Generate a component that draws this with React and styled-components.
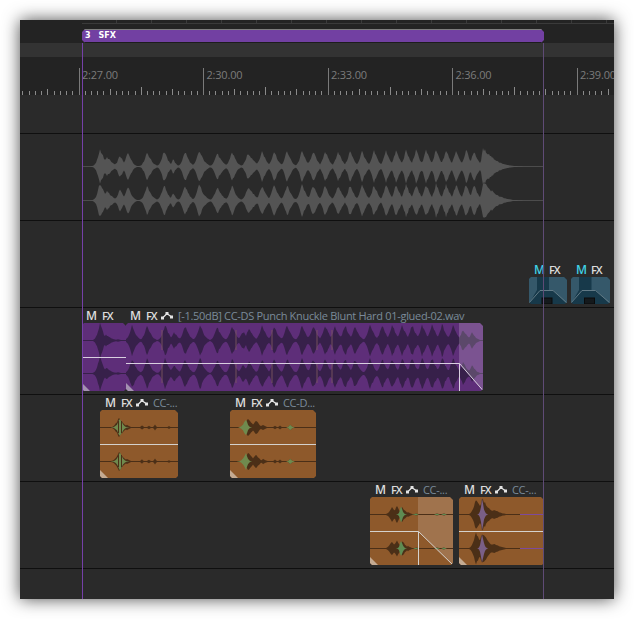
import React from 'react';
import styled, { createGlobalStyle } from 'styled-components';

const GlobalStyle = createGlobalStyle`
  html, body { margin: 0; background: #fff; }
  body { font-family: "Open Sans", "Liberation Sans", sans-serif; }
`;

// all clip data below is in page pixels, the panel sits at 20,20
const PANEL_X = 20;

const Panel = styled.div`
  position: relative;
  width: 594px;
  height: 579px;
  margin: 20px;
  background: #2a2a2a;
  overflow: hidden;
  display: flex;
  flex-direction: column;
  box-shadow: 0 0 16px rgba(0, 0, 0, 0.7);
`;

const TopStrip = styled.div`
  height: 4px;
  background: #232323;
  display: flex;
  flex-shrink: 0;
  padding-left: 62px;
`;

const TopSegment = styled.div`
  width: 35px;
  flex-shrink: 0;
  box-sizing: border-box;
  border-right: 1px solid #3a3a3a;
  border-bottom: 1px solid #3a3a3a;
`;

const MarkerLane = styled.div`
  height: 19px;
  flex-shrink: 0;
  box-sizing: border-box;
  background: #232323;
  padding: 5px 0 0 62px;
`;

const Marker = styled.div`
  width: 462px;
  height: 14px;
  box-sizing: border-box;
  background: #7240a2;
  border-top: 1px solid #7d7d7d;
  border-bottom: 1px solid #1d1d1d;
  clip-path: polygon(3px 0, calc(100% - 3px) 0, 100% 3px, 100% calc(100% - 3px), calc(100% - 3px) 100%, 3px 100%, 0 calc(100% - 3px), 0 3px);
  color: #fff;
  font: bold 8px/12px "DejaVu Sans", sans-serif;
  padding-left: 3px;
  display: flex;
  gap: 8px;
`;

const GapStrip = styled.div`
  height: 14px;
  flex-shrink: 0;
  background: #333333;
`;

const Ruler = styled.div`
  position: relative;
  height: 38px;
  flex-shrink: 0;
  background: #232323;
`;

const RulerLabels = styled.div`
  display: flex;
  padding: 10px 0 0 62px;
`;

const RulerLabel = styled.span`
  flex: 0 0 124.5px;
  font: 11px/16px "Open Sans", sans-serif;
  letter-spacing: -0.2px;
  color: #7c7c7c;
`;

const RulerTicks = styled.svg`
  position: absolute;
  left: 0;
  top: 0;
`;

const Track = styled.div`
  position: relative;
  flex-shrink: 0;
  height: ${(p) => p.$height}px;
  box-sizing: border-box;
  border-bottom: ${(p) => (p.$last ? 'none' : '1px solid #0f0f0f')};
`;

const TrackWave = styled.svg`
  position: absolute;
  left: ${(p) => p.$left}px;
  top: 0;
`;

const ClipGroup = styled.div`
  position: absolute;
  left: ${(p) => p.$left}px;
  top: ${(p) => p.$top}px;
  width: ${(p) => p.$width}px;
`;

const ClipHeader = styled.div`
  height: 15px;
  display: flex;
  align-items: center;
  padding-left: ${(p) => p.$inset}px;
  white-space: nowrap;
`;

const HeadM = styled.span`
  font: 600 12px/15px "Open Sans", sans-serif;
  color: ${(p) => (p.$active ? '#3fd0e4' : '#dcdcdc')};
  width: ${(p) => (p.$active ? 15 : 16)}px;
`;

const HeadFx = styled.span`
  font: 600 11px/15px "Open Sans", sans-serif;
  letter-spacing: -1.1px;
  color: #dcdcdc;
  width: 15px;
`;

const HeadName = styled.span`
  font: 11px/15px "Open Sans", sans-serif;
  letter-spacing: -0.31px;
  color: #7b8a99;
  margin-left: 5px;
`;

const ClipBody = styled.svg`
  display: block;
  clip-path: polygon(2px 0, calc(100% - 3px) 0, 100% 3px, 100% calc(100% - 2px), calc(100% - 2px) 100%, 2px 100%, 0 calc(100% - 2px), 0 2px);
`;

const Cursor = styled.div`
  position: absolute;
  left: ${(p) => p.$left}px;
  top: 23px;
  bottom: 0;
  width: 1px;
  background: ${(p) => p.$color};
`;

function jitter(x, seed) {
  const v = Math.sin(x * 12.9898 + seed * 78.233) * 43758.5453;
  return v - Math.floor(v);
}

// mirrored envelope around cy, one point per pixel. bursts are [x, amp, decay, attack]
function wavePath(bursts, from, to, cy, amp, seed = 1) {
  const top = [];
  const bottom = [];
  for (let x = from; x <= to; x++) {
    let e = 0;
    for (const [bx, a, decay = 4.5, attack = 3.2] of bursts) {
      const d = Math.abs(x - bx) / (x < bx ? attack : decay);
      e = Math.max(e, a * Math.exp(-Math.pow(d, 1.4)));
    }
    const h = e * amp * (0.8 + 0.2 * jitter(x, seed));
    top.push(`${x - from},${(cy - h).toFixed(1)}`);
    bottom.unshift(`${x - from},${(cy + h).toFixed(1)}`);
  }
  return `M${top.join(' L')} L${bottom.join(' L')} Z`;
}

function Stereo({ bursts, from, to, y1, y2, amp, color, lineColor }) {
  const w = to - from;
  return (
    <>
      {lineColor !== 'none' && <path d={`M0 ${y1 + 0.5}H${w}M0 ${y2 + 0.5}H${w}`} stroke={lineColor || color} />}
      <path d={wavePath(bursts, from, to, y1 + 0.5, amp, 1)} fill={color} />
      <path d={wavePath(bursts, from, to, y2 + 0.5, amp, 2)} fill={color} />
    </>
  );
}

const EnvelopeIcon = () => (
  <svg width="12" height="9" viewBox="0 0 12 9" style={{ flexShrink: 0 }}>
    <path d="M1.5 7 L6 2.5 L10.5 6" fill="none" stroke="#e4e4e4" strokeWidth="1.3" />
    <rect x="0" y="5.5" width="3" height="3" fill="#e4e4e4" />
    <rect x="4.5" y="1" width="3" height="3" fill="#e4e4e4" />
    <rect x="9" y="4.5" width="3" height="3" fill="#e4e4e4" />
  </svg>
);

function Header({ name, active, inset = 5 }) {
  return (
    <ClipHeader $inset={inset}>
      <HeadM $active={active}>M</HeadM>
      <HeadFx>FX</HeadFx>
      {name && <EnvelopeIcon />}
      {name && <HeadName>{name}</HeadName>}
    </ClipHeader>
  );
}

const BASE_BURSTS = [
  [132, 0.95], [147, 0.95], [165, 0.95], [174, 0.5], [185, 0.9], [200, 0.95], [217, 0.85],
  [232, 0.9], [243, 0.55], [249, 0.8], [262, 0.95], [274, 0.9], [287, 0.95], [302, 0.92],
  [313, 0.92], [325, 0.95], [335, 0.9], [345, 0.95], [355, 0.9], [370, 0.95], [382, 0.95],
  [392, 0.97], [402, 0.97], [412, 0.97], [422, 1], [432, 1], [442, 1], [453, 1],
];

const GREY_BURSTS = [
  [100, 1.05, 5, 3], [107, 0.55, 6], [120, 0.65, 4], [128, 0.88, 4], [147, 0.85, 5], [164, 0.92], [173, 0.45, 3, 2],
  [185, 0.88], [199, 0.92, 5.5], [217, 0.78, 5.5], [232, 0.88], [248, 0.8, 7], [262, 0.92], [274, 0.92],
  [287, 0.92], [302, 0.92], [313, 0.92], [325, 0.92], [338, 0.92], [350, 0.92], [362, 0.92],
  [374, 0.92], [386, 0.95], [396, 0.95], [406, 0.95], [416, 0.97], [426, 0.97], [436, 0.97],
  [446, 0.97], [456, 0.97], [466, 0.97], [474, 0.92], [483, 1.05, 13, 2],
];

const PurpleShort = ({ width, height }) => (
  <ClipBody width={width} height={height}>
    <rect width={width} height={height} fill="#5e2e79" />
    <Stereo bursts={[[18, 1.05, 4, 3], [24, 0.35, 6], [36, 0.08, 3]]} from={0} to={width} y1={17} y2={50} amp={17} color="#37204a" />
    <path d={`M0 34.5H${width}`} stroke="#d9cfe0" />
    <path d="M0 60 L8 68 L0 68 Z" fill="#a491b1" />
  </ClipBody>
);

const PurpleLong = ({ width, height }) => (
  <ClipBody width={width} height={height}>
    <rect width={width} height={height} fill="#5e2e79" />
    <Stereo bursts={BASE_BURSTS} from={126} to={459} y1={17} y2={50} amp={17} color="#37204a" />
    <g transform="translate(333 0)">
      <Stereo bursts={[[463, 0.7], [472, 0.5, 4], [478, 0.1, 2]]} from={459} to={483} y1={17} y2={50} amp={17} color="#37204a" />
    </g>
    {[35, 109, 145, 190, 205].map((x) => (
      <g key={x} fill="#7a5560" opacity="0.45">
        <rect x={x} y={7} width={2} height={20} />
        <rect x={x} y={40} width={2} height={20} />
      </g>
    ))}
    <path d="M333 0 H357 V68 L333 40 Z" fill="#fff" opacity="0.18" />
    <path d="M0 40.5H333.5V68M333.5 40.5L357 67.5" fill="none" stroke="#d9cfe0" />
    <path d="M0 60 L8 68 L0 68 Z" fill="#a491b1" />
  </ClipBody>
);

const OrangeClip = ({ width, height, bursts, x0, tint, tintColor, stripes = [], tail, amp = 10, line, fadeAt }) => (
  <ClipBody width={width} height={height}>
    <rect width={width} height={height} fill="#8e592b" />
    {fadeAt && <path d={`M${fadeAt} 0 H${width} V${height} L${fadeAt} ${line} Z`} fill="#fff" opacity="0.16" />}
    <Stereo bursts={bursts} from={x0} to={x0 + width} y1={17} y2={51} amp={amp} color="#4b2f17" />
    <Stereo bursts={tint} from={x0} to={x0 + width} y1={17} y2={51} amp={amp} color={tintColor} lineColor="none" />
    {stripes.map((s) => (
      <g key={s} fill="#4b2f17">
        <rect x={s} y={17 - amp * 0.6} width={1} height={amp * 1.2} />
        <rect x={s} y={51 - amp * 0.6} width={1} height={amp * 1.2} />
      </g>
    ))}
    {tail && <path d={`M${tail} 17.5H${width}M${tail} 51.5H${width}`} stroke="#7d4a9c" />}
    <path d={`M0 ${line + 0.5}H${fadeAt ? fadeAt + 0.5 : width}`} stroke="#d5d2ce" />
    {fadeAt && <path d={`M${fadeAt + 0.5} ${line + 0.5}V${height}M${fadeAt + 0.5} ${line + 0.5}L${width} ${height}`} fill="none" stroke="#d5d2ce" />}
    <path d="M0 60 L8 68 L0 68 Z" fill="#c4ab93" />
  </ClipBody>
);

const TealClip = ({ width, height }) => {
  const mid = width / 2;
  return (
    <ClipBody width={width} height={height}>
      <rect width={width} height={height} fill="#17394a" />
      <path d={`M0 0 H8 V13 L0 ${height} Z`} fill="#35586a" />
      <path d={`M${mid + 1} 0 H${width} V${height} L${mid + 5} 13 H${mid + 1} Z`} fill="#35586a" />
      <path d={`M0 ${height - 1} L11 13.5 H${mid + 5} L${width} ${height - 1}`} fill="none" stroke="#627a86" />
      <rect x={mid - 6} y={height - 6} width={10} height={6} fill="#14191c" stroke="#0a0a0a" />
    </ClipBody>
  );
};

function ClipAt({ x, top, width, height, name, active, inset, children }) {
  return (
    <ClipGroup $left={x - PANEL_X} $top={top} $width={width}>
      <Header name={name} active={active} inset={inset} />
      {children({ width, height })}
    </ClipGroup>
  );
}

const tickLines = [];
for (let i = -10; i <= 90; i++) {
  const x = Math.round(58.5 + i * 6.225) + 0.5;
  const n = ((i % 20) + 20) % 20;
  const y1 = n === 0 ? 11 : n === 10 ? 30 : n % 5 === 0 ? 32 : 34;
  tickLines.push(<line key={i} x1={x} x2={x} y1={y1} y2={38} stroke={n === 0 ? '#7a7a7a' : '#8a8a8a'} />);
}

export default function App() {
  return (
    <>
      <GlobalStyle />
      <Panel>
        <TopStrip>
          {Array.from({ length: 16 }, (_, i) => <TopSegment key={i} />)}
        </TopStrip>
        <MarkerLane>
          <Marker><span>3</span><span>SFX</span></Marker>
        </MarkerLane>
        <GapStrip />
        <Ruler>
          <RulerTicks width="594" height="38">{tickLines}</RulerTicks>
          <RulerLabels>
            {['2:27.00', '2:30.00', '2:33.00', '2:36.00', '2:39.00'].map((t) => (
              <RulerLabel key={t}>{t}</RulerLabel>
            ))}
          </RulerLabels>
        </Ruler>

        <Track $height={39} />
        <Track $height={87}>
          <TrackWave $left={62} width="462" height="86">
            <Stereo bursts={GREY_BURSTS} from={82} to={543} y1={32} y2={66} amp={18} color="#545454" lineColor="#4c4c4c" />
          </TrackWave>
        </Track>
        <Track $height={87}>
          <ClipAt x={529} top={41} width={38} height={27} active>{(p) => <TealClip {...p} />}</ClipAt>
          <ClipAt x={571} top={41} width={39} height={27} active>{(p) => <TealClip {...p} />}</ClipAt>
        </Track>
        <Track $height={87}>
          <ClipAt x={82} top={0} width={44} height={68} inset={4}>{(p) => <PurpleShort {...p} />}</ClipAt>
          <ClipAt x={126} top={0} width={357} height={68} name="[-1.50dB] CC-DS Punch Knuckle Blunt Hard 01-glued-02.wav" inset={4}>
            {(p) => <PurpleLong {...p} />}
          </ClipAt>
        </Track>
        <Track $height={87}>
          <ClipAt x={100} top={0} width={78} height={68} name="CC-...">
            {(p) => <OrangeClip {...p} x0={100} amp={10} line={34} tintColor="#6f8a4e" stripes={[18, 21]}
              tint={[[120, 0.95, 3, 3]]}
              bursts={[[119, 1, 5, 3.5], [127, 0.3, 3, 2], [142, 0.25, 1.5, 1.5], [149, 0.22, 1.5, 1.5], [155, 0.3, 1.5, 1.5], [169, 0.14, 1.5, 1.5]]} />}
          </ClipAt>
          <ClipAt x={230} top={0} width={86} height={68} name="CC-D...">
            {(p) => <OrangeClip {...p} x0={230} amp={10} line={34} tintColor="#6f8a4e"
              tint={[[246, 0.9, 2, 3], [290, 0.3, 2, 1.5]]}
              bursts={[[248, 1, 5, 3], [256, 0.8, 3.5, 3], [263, 0.3, 3, 2], [275, 0.2, 1.5, 1.5], [280, 0.2, 1.5, 1.5], [290, 0.3, 2, 1.5]]} />}
          </ClipAt>
        </Track>
        <Track $height={87}>
          <ClipAt x={370} top={0} width={83} height={68} name="CC-...">
            {(p) => <OrangeClip {...p} x0={370} amp={9} line={34} fadeAt={48} tintColor="#5e8b52"
              tint={[[401, 1, 2, 1.5], [416, 0.1, 2, 2], [437, 0.1, 2, 2], [444, 0.1, 2, 2]]}
              bursts={[[392, 0.9, 3, 3], [397, 1, 3, 3], [402, 0.9, 4, 2], [408, 0.3, 3, 2], [416, 0.12, 2, 2], [437, 0.12, 2, 2], [444, 0.12, 2, 2]]} />}
          </ClipAt>
          <ClipAt x={459} top={0} width={85} height={68} name="CC-...">
            {(p) => <OrangeClip {...p} x0={459} amp={17} line={34} tail={61} tintColor="#7a5f86"
              tint={[[482, 0.95, 2, 1.5]]}
              bursts={[[476, 1, 5, 3], [482, 0.95, 8, 3], [494, 0.3, 7, 3]]} />}
          </ClipAt>
        </Track>
        <Track $height={30} $last />

        <Cursor $left={62} $color="#7540a8" />
        <Cursor $left={523} $color="#5f4b76" />
      </Panel>
    </>
  );
}
